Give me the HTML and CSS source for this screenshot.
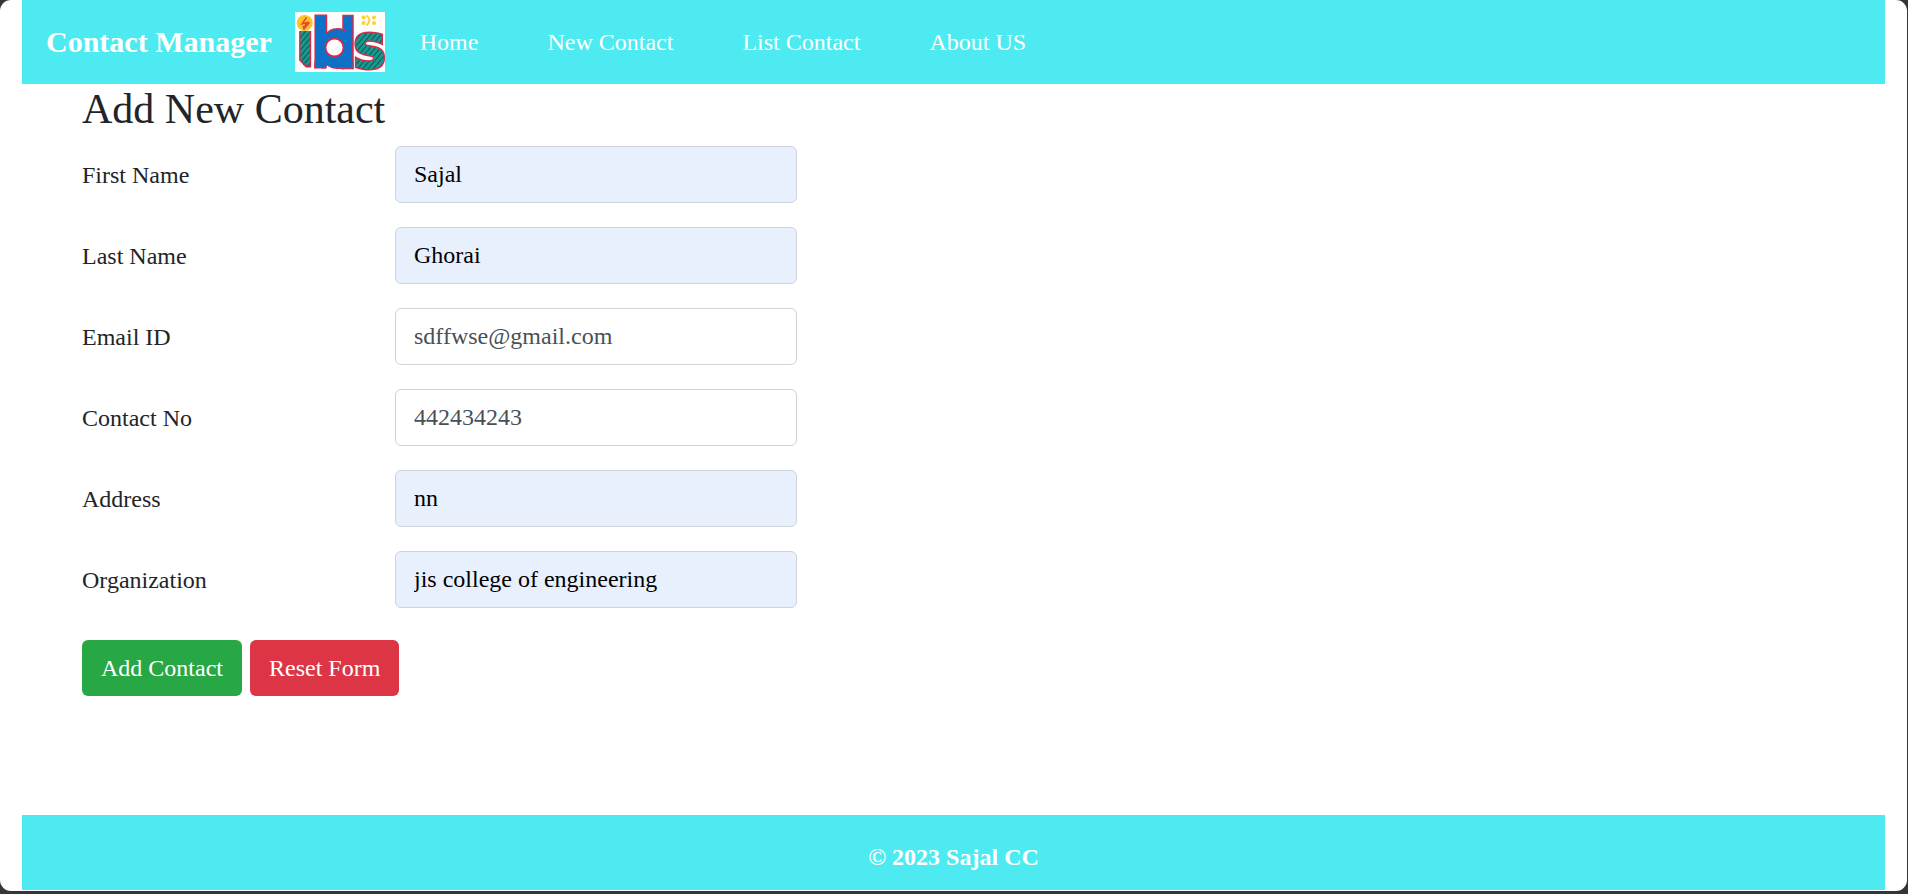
FILE: index.html
```html
<!DOCTYPE html>
<html lang="en">
<head>
<meta charset="utf-8">
<meta name="viewport" content="width=device-width, initial-scale=1">
<title>Contact Manager</title>
<link rel="stylesheet" href="styles.css">
</head>
<body>
<header class="navbar">
  <a class="brand" href="#">Contact Manager</a>
  <svg class="logo" viewBox="0 0 90 60" role="img" aria-label="ids logo">
    <defs>
      <pattern id="hatch" width="4" height="4" patternUnits="userSpaceOnUse" patternTransform="rotate(40)">
        <rect width="4" height="4" fill="#169a8f"/>
        <rect width="1" height="4" fill="#125553"/>
      </pattern>
      <pattern id="crayon" width="5" height="5" patternUnits="userSpaceOnUse" patternTransform="rotate(30)">
        <rect width="5" height="5" fill="#0b72cc"/>
        <rect width="1" height="5" fill="#1a69bd"/>
      </pattern>
    </defs>
    <rect width="90" height="60" fill="#fdfdfd"/>
    <text class="glyph glyph-i" x="1" y="54">i</text>
    <path d="M3 47l9 10H3z" fill="#fdfdfd"/>
    <path d="M5 48l8 7" fill="none" stroke="#d52b4d" stroke-width="1.500"/>
    <rect x="2" y="2" width="16" height="17" fill="#fdfdfd"/>
    <circle cx="9.700" cy="11" r="8" fill="#fcc42c"/>
    <path d="M11.500 5.500 7 12l5-1.500-3.500 6M12 10.500l2 .500-5 6-1-3" fill="none" stroke="#e8482c" stroke-width="1.500"/>
    <rect x="48" y="3.500" width="10" height="53" fill="url(#crayon)" stroke="#d52b4d" stroke-width="1.500"/>
    <path d="M20 49h11v7h-5l-2-2-4 2zM46 50l12-1v8l-5-2-5 2-6-1z" fill="#0b72cc" stroke="#d52b4d" stroke-width="1"/>
    <text class="glyph glyph-b" x="16" y="55">b</text>
    <rect x="46" y="20" width="11" height="35" fill="url(#crayon)"/>
    <circle cx="39.500" cy="35.500" r="16" fill="url(#crayon)"/>
    <path d="M22 46h33v8l-4-1-4 2-4-1-5 2-7-3-4-1-5 2z" fill="url(#crayon)"/>
    <circle cx="39.500" cy="35.500" r="9" fill="#fdfdfd" stroke="#d52b4d" stroke-width="1.800"/>
    <text class="glyph glyph-s" x="58" y="56">s</text>
    <g fill="#fad232">
      <circle cx="68.500" cy="5.500" r="2"/><circle cx="68.500" cy="11" r="2"/>
      <circle cx="79" cy="5.500" r="2"/><circle cx="79" cy="11" r="2"/>
    </g>
    <path d="M71.500 3.500q6 4.500 0 10" fill="none" stroke="#fad232" stroke-width="2"/>
  </svg>
  <nav class="links">
    <a href="#">Home</a>
    <a href="#">New Contact</a>
    <a href="#">List Contact</a>
    <a href="#">About US</a>
  </nav>
</header>

<main class="content">
  <h1 class="title">Add New Contact</h1>
  <form class="form">
    <div class="field">
      <label for="first">First Name</label>
      <input class="filled" id="first" type="text" value="Sajal">
    </div>
    <div class="field">
      <label for="last">Last Name</label>
      <input class="filled" id="last" type="text" value="Ghorai">
    </div>
    <div class="field">
      <label for="email">Email ID</label>
      <input id="email" type="email" value="sdffwse@gmail.com">
    </div>
    <div class="field">
      <label for="phone">Contact No</label>
      <input id="phone" type="tel" value="442434243">
    </div>
    <div class="field">
      <label for="address">Address</label>
      <input class="filled" id="address" type="text" value="nn">
    </div>
    <div class="field">
      <label for="org">Organization</label>
      <input class="filled" id="org" type="text" value="jis college of engineering">
    </div>
    <div class="actions">
      <button class="btn btn-add" type="button">Add Contact</button>
      <button class="btn btn-reset" type="reset">Reset Form</button>
    </div>
  </form>
</main>

<footer class="footer">© 2023 Sajal CC</footer>
</body>
</html>
```

FILE: styles.css
```css
* {
  box-sizing: border-box;
}

html {
  background: #363637;
}

body {
  display: flex;
  flex-direction: column;
  min-height: calc(100vh - 3px);
  margin: 0 1px 3px 0;
  padding: 0 22px 1px;
  background: #fff;
  border-radius: 11px;
  color: #212529;
  font-family: "Liberation Serif", "Times New Roman", serif;
  font-size: 24px;
  line-height: 36px;
}

.navbar {
  display: flex;
  align-items: center;
  padding: 12px 24px;
  background: #4debf1;
}

.navbar a {
  color: #fff;
  text-decoration: none;
}

.brand {
  margin-right: 23px;
  font-size: 30px;
  font-weight: bold;
}

.logo {
  display: block;
  width: 90px;
  height: 60px;
  margin-right: 35px;
  overflow: visible;
}

.glyph {
  font-family: "Liberation Sans", Arial, sans-serif;
  font-weight: bold;
  paint-order: stroke;
  stroke: #d52b4d;
  stroke-width: 3px;
}

.glyph-i {
  font-size: 66px;
  fill: url(#hatch);
}

.glyph-b {
  font-size: 71px;
  fill: url(#crayon);
}

.glyph-s {
  font-family: "DejaVu Sans Condensed", "DejaVu Sans", sans-serif;
  font-size: 62px;
  fill: url(#hatch);
}

.links {
  display: flex;
  gap: 69px;
}

.content {
  padding: 0 60px 24px;
}

.title {
  margin: 0 0 12px;
  font-size: 42px;
  font-weight: normal;
  line-height: 50px;
}

.form {
  display: flex;
  flex-direction: column;
  gap: 24px;
}

.field {
  display: grid;
  grid-template-columns: 313px minmax(0, 402px);
  align-items: center;
}

.field input {
  width: 100%;
  height: 57px;
  padding: 0 18px;
  border: 1px solid #ced4da;
  border-radius: 6px;
  background: #fff;
  color: #495057;
  font: inherit;
}

.field .filled {
  background: #e8f0fe;
  color: #000;
}

.actions {
  display: flex;
  gap: 8px;
  padding-top: 8px;
}

.btn {
  height: 56px;
  padding: 0 19px;
  border: 0;
  border-radius: 6px;
  color: #fff;
  font: inherit;
}

.btn-add {
  background: #28a745;
}

.btn-reset {
  background: #dc3545;
}

.footer {
  margin-top: auto;
  padding: 24px 0 15px;
  background: #4debf1;
  color: #fff;
  font-weight: bold;
  text-align: center;
}
```
